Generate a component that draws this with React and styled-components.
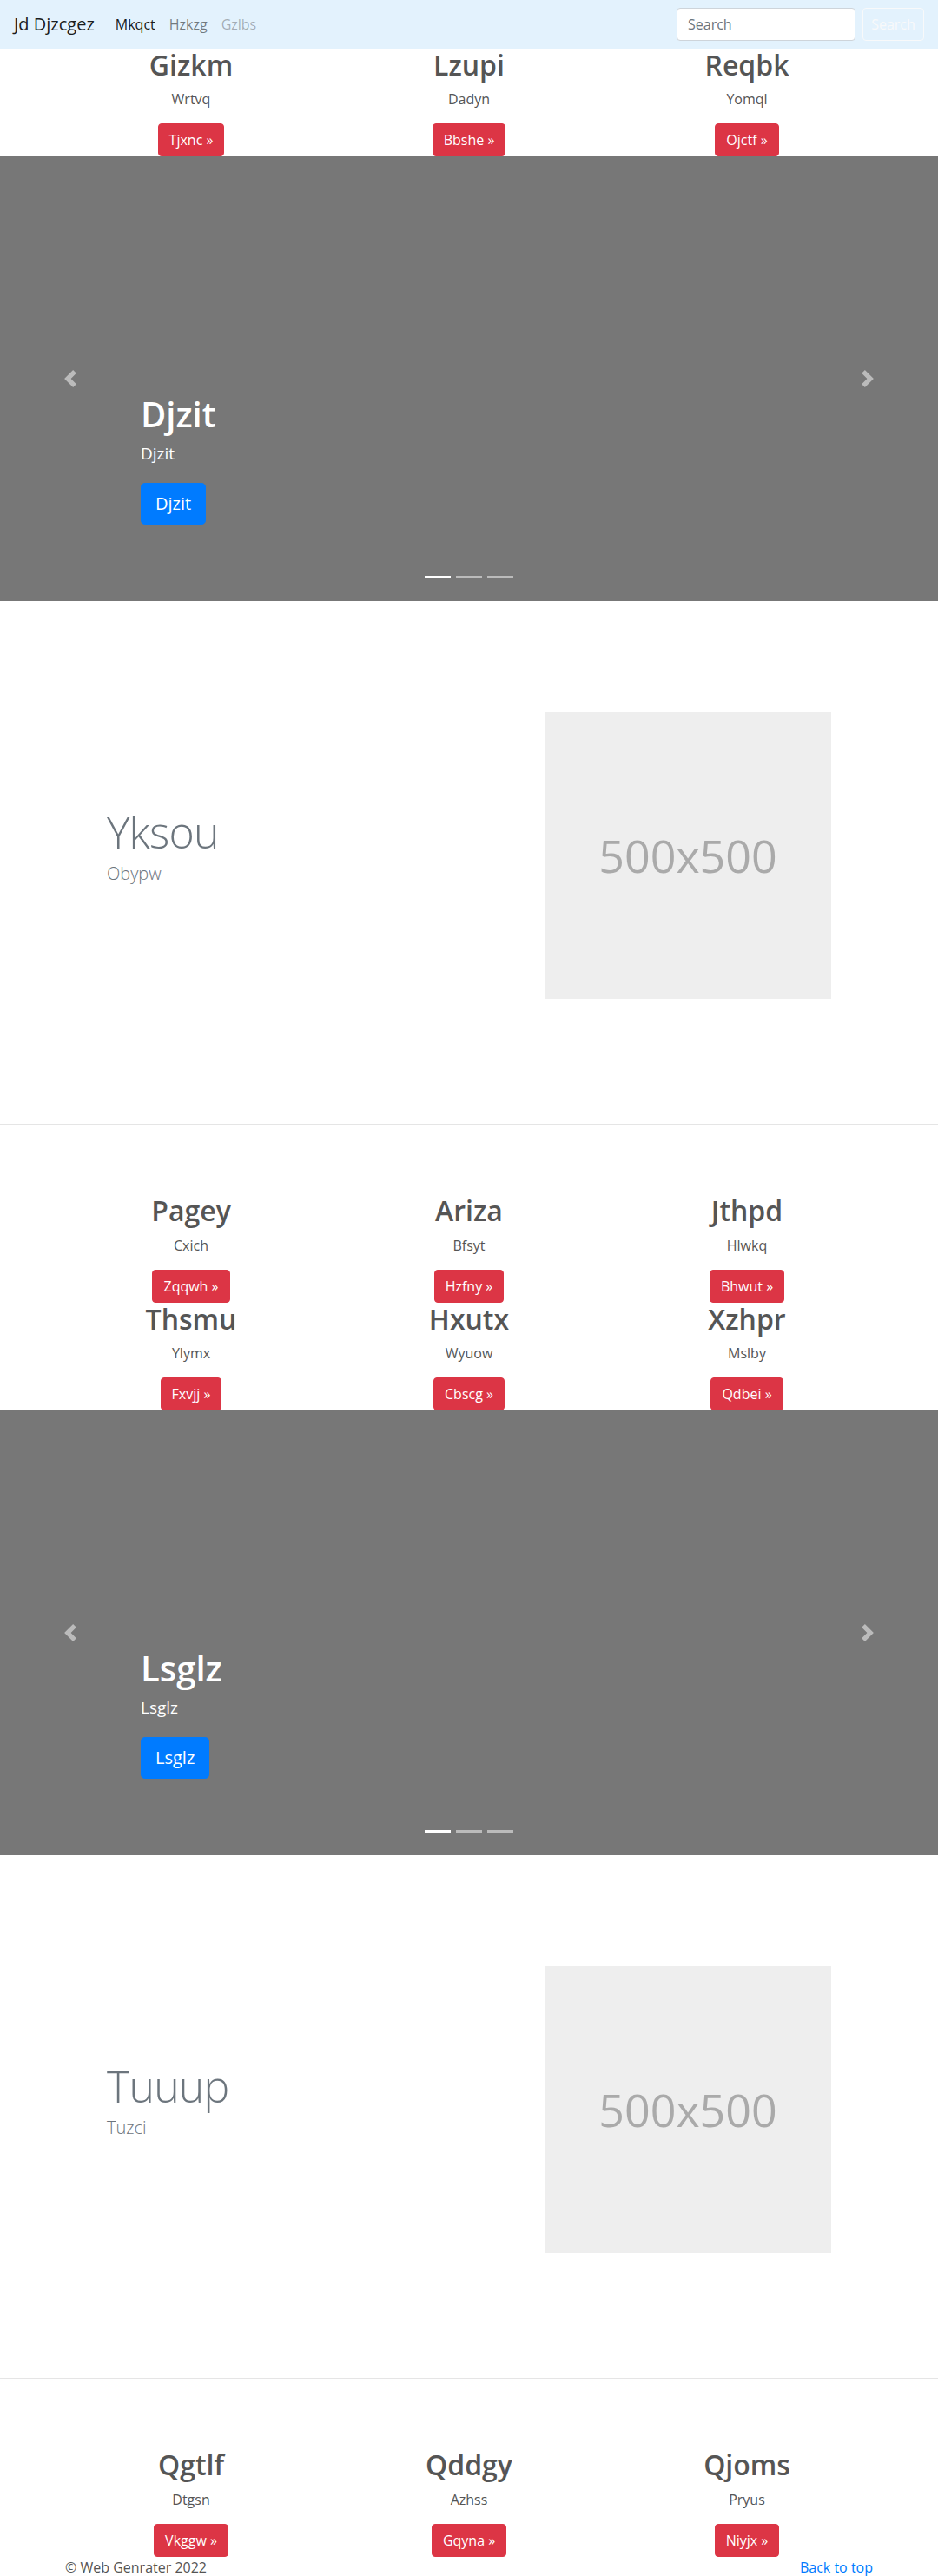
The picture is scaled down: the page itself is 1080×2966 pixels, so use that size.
import React from "react";
import styled, { createGlobalStyle } from "styled-components";

const GlobalStyle = createGlobalStyle`
  *, *::before, *::after {
    box-sizing: border-box;
  }
  body {
    margin: 0;
    font-family: "Segoe UI", "Open Sans", "Noto Sans", sans-serif;
    font-size: 16px;
    line-height: 1.5;
    color: #555;
    background: #fff;
  }
`;

const topRow = [
  { title: "Gizkm", text: "Wrtvq", btn: "Tjxnc" },
  { title: "Lzupi", text: "Dadyn", btn: "Bbshe" },
  { title: "Reqbk", text: "Yomql", btn: "Ojctf" },
];

const middleRows = [
  [
    { title: "Pagey", text: "Cxich", btn: "Zqqwh" },
    { title: "Ariza", text: "Bfsyt", btn: "Hzfny" },
    { title: "Jthpd", text: "Hlwkq", btn: "Bhwut" },
  ],
  [
    { title: "Thsmu", text: "Ylymx", btn: "Fxvjj" },
    { title: "Hxutx", text: "Wyuow", btn: "Cbscg" },
    { title: "Xzhpr", text: "Mslby", btn: "Qdbei" },
  ],
];

const bottomRow = [
  { title: "Qgtlf", text: "Dtgsn", btn: "Vkggw" },
  { title: "Qddgy", text: "Azhss", btn: "Gqyna" },
  { title: "Qjoms", text: "Pryus", btn: "Niyjx" },
];

const ChevronLeft = () => (
  <svg width="20" height="20" viewBox="0 0 8 8" fill="#fff">
    <path d="M5.25 0l-4 4 4 4 1.5-1.5L4.25 4l2.5-2.5L5.25 0z" />
  </svg>
);

const ChevronRight = () => (
  <svg width="20" height="20" viewBox="0 0 8 8" fill="#fff">
    <path d="M2.75 0l-1.5 1.5L3.75 4l-2.5 2.5L2.75 8l4-4-4-4z" />
  </svg>
);

const Columns = ({ items }) => (
  <Row>
    {items.map((c) => (
      <Col key={c.title}>
        <ColTitle>{c.title}</ColTitle>
        <ColText>{c.text}</ColText>
        <DangerButton href="#">{c.btn} &raquo;</DangerButton>
      </Col>
    ))}
  </Row>
);

const Carousel = ({ label }) => (
  <Slide>
    <Indicators>
      <Indicator $active />
      <Indicator />
      <Indicator />
    </Indicators>
    <Caption>
      <CaptionTitle>{label}</CaptionTitle>
      <CaptionText>{label}</CaptionText>
      <PrimaryButton href="#">{label}</PrimaryButton>
    </Caption>
    <Control $side="left">
      <ChevronLeft />
    </Control>
    <Control $side="right">
      <ChevronRight />
    </Control>
  </Slide>
);

const Featurette = ({ title, lead }) => (
  <FeatureWrap>
    <FeatureRow>
      <FeatureText>
        <FeatureHeading>{title}</FeatureHeading>
        <Lead>{lead}</Lead>
      </FeatureText>
      <FeatureImageCol>
        <Placeholder>500x500</Placeholder>
      </FeatureImageCol>
    </FeatureRow>
  </FeatureWrap>
);

export default function App() {
  return (
    <>
      <GlobalStyle />
      <Navbar>
        <Brand href="#">Jd Djzcgez</Brand>
        <NavList>
          <NavLink href="#" $tone="active">Mkqct</NavLink>
          <NavLink href="#">Hzkzg</NavLink>
          <NavLink href="#" $tone="disabled">Gzlbs</NavLink>
        </NavList>
        <SearchForm onSubmit={(e) => e.preventDefault()}>
          <SearchInput type="text" placeholder="Search" />
          <OutlineButton type="submit">Search</OutlineButton>
        </SearchForm>
      </Navbar>

      <Container>
        <Columns items={topRow} />
      </Container>

      <Carousel label="Djzit" />

      <Featurette title="Yksou" lead="Obypw" />
      <Divider />

      <Container>
        {middleRows.map((r, i) => (
          <Columns key={i} items={r} />
        ))}
      </Container>

      <Carousel label="Lsglz" />

      <Featurette title="Tuuup" lead="Tuzci" />
      <Divider />

      <Container>
        <Columns items={bottomRow} />
      </Container>

      <Footer>
        <BackToTop href="#">Back to top</BackToTop>
        <Copy>&copy; Web Genrater 2022</Copy>
      </Footer>
    </>
  );
}

const Navbar = styled.nav`
  display: flex;
  align-items: center;
  height: 56px;
  padding: 8px 16px;
  background-color: #e3f2fd;
`;

const Brand = styled.a`
  display: inline-block;
  padding: 5px 0;
  margin-right: 16px;
  font-size: 20px;
  line-height: 30px;
  color: rgba(0, 0, 0, 0.9);
  text-decoration: none;
  white-space: nowrap;
`;

const NavList = styled.div`
  display: flex;
  flex: 1;
`;

const NavLink = styled.a`
  display: block;
  padding: 8px;
  line-height: 24px;
  text-decoration: none;
  color: ${(p) =>
    p.$tone === "active"
      ? "rgba(0, 0, 0, 0.9)"
      : p.$tone === "disabled"
      ? "rgba(0, 0, 0, 0.3)"
      : "rgba(0, 0, 0, 0.5)"};
`;

const SearchForm = styled.form`
  display: flex;
  align-items: center;
  gap: 8px;
  margin: 0;
`;

const SearchInput = styled.input`
  width: 206px;
  height: 38px;
  padding: 6px 12px;
  font-family: inherit;
  font-size: 16px;
  line-height: 1.5;
  color: #495057;
  background: #fff;
  border: 1px solid #ced4da;
  border-radius: 4px;
  outline: none;

  &::placeholder {
    color: #6c757d;
  }
`;

const OutlineButton = styled.button`
  width: 71px;
  height: 38px;
  padding: 6px 0;
  font-family: inherit;
  font-size: 16px;
  line-height: 1.5;
  color: #f8f9fa;
  background: transparent;
  border: 1px solid #f8f9fa;
  border-radius: 4px;
`;

const Container = styled.div`
  width: 960px;
  margin: 0 auto;
  padding: 0 15px;
`;

const Row = styled.div`
  display: grid;
  grid-template-columns: repeat(3, 1fr);
  margin: 0 -15px;
`;

const Col = styled.div`
  padding: 0 15px;
  text-align: center;
`;

const ColTitle = styled.h2`
  margin: 0 0 8px;
  font-size: 32px;
  font-weight: 600;
  line-height: 1.2;
  color: #555;
`;

const ColText = styled.p`
  margin: 0 0 16px;
`;

const DangerButton = styled.a`
  display: inline-block;
  padding: 6px 12px;
  font-size: 16px;
  line-height: 24px;
  color: #fff;
  background-color: #dc3545;
  border: 1px solid #dc3545;
  border-radius: 4px;
  text-decoration: none;
  vertical-align: top;
`;

const Slide = styled.div`
  position: relative;
  height: 512px;
  background-color: #777;
  overflow: hidden;
`;

const Caption = styled.div`
  position: absolute;
  left: 15%;
  right: 15%;
  bottom: 48px;
  padding: 20px 0;
  color: #fff;
  text-align: left;
  z-index: 2;
`;

const CaptionTitle = styled.h1`
  margin: 0 0 6px;
  font-size: 40px;
  font-weight: 600;
  line-height: 1.2;
`;

const CaptionText = styled.p`
  margin: 0 0 19px;
  font-size: 19px;
  line-height: 30px;
`;

const PrimaryButton = styled.a`
  display: inline-block;
  margin-bottom: 20px;
  padding: 8px 16px;
  font-size: 20px;
  line-height: 30px;
  color: #fff;
  background-color: #007bff;
  border: 1px solid #007bff;
  border-radius: 4.8px;
  text-decoration: none;
  vertical-align: top;
`;

const Control = styled.a`
  position: absolute;
  top: 0;
  bottom: 0;
  ${(p) => (p.$side === "left" ? "left: 0;" : "right: 0;")}
  width: 15%;
  display: flex;
  align-items: center;
  justify-content: center;
  opacity: 0.5;
  z-index: 1;
`;

const Indicators = styled.ol`
  position: absolute;
  left: 0;
  right: 0;
  bottom: 0;
  display: flex;
  justify-content: center;
  margin: 0 0 16px;
  padding: 0;
  list-style: none;
  z-index: 3;
`;

const Indicator = styled.li`
  width: 30px;
  height: 3px;
  margin: 10px 3px;
  background-color: ${(p) => (p.$active ? "#fff" : "rgba(255, 255, 255, 0.5)")};
`;

const FeatureWrap = styled.section`
  width: 960px;
  margin: 0 auto;
  padding: 128px 48px 144px;
`;

const FeatureRow = styled.div`
  display: grid;
  grid-template-columns: 7fr 5fr;
  align-items: center;
`;

const FeatureText = styled.div`
  padding: 0 15px;
`;

const FeatureHeading = styled.h2`
  margin: 0 0 8px;
  font-size: 50px;
  font-weight: 300;
  line-height: 1;
  letter-spacing: -0.8px;
  color: #6c757d;
`;

const Lead = styled.p`
  margin: 0 0 16px;
  font-size: 20px;
  font-weight: 300;
  line-height: 1.5;
  color: #6c757d;
`;

const FeatureImageCol = styled.div`
  padding: 0 15px;
`;

const Placeholder = styled.div`
  width: 330px;
  height: 330px;
  display: flex;
  align-items: center;
  justify-content: center;
  background-color: #eee;
  color: #aaa;
  font-size: 52px;
  line-height: 1;
`;

const Divider = styled.hr`
  margin: 0 0 80px;
  border: 0;
  border-top: 1px solid rgba(0, 0, 0, 0.1);
`;

const Footer = styled.footer`
  width: 960px;
  margin: 0 auto;
  padding: 0 15px;
`;

const BackToTop = styled.a`
  float: right;
  color: #007bff;
  text-decoration: none;
`;

const Copy = styled.p`
  margin: 0 0 16px;
`;
